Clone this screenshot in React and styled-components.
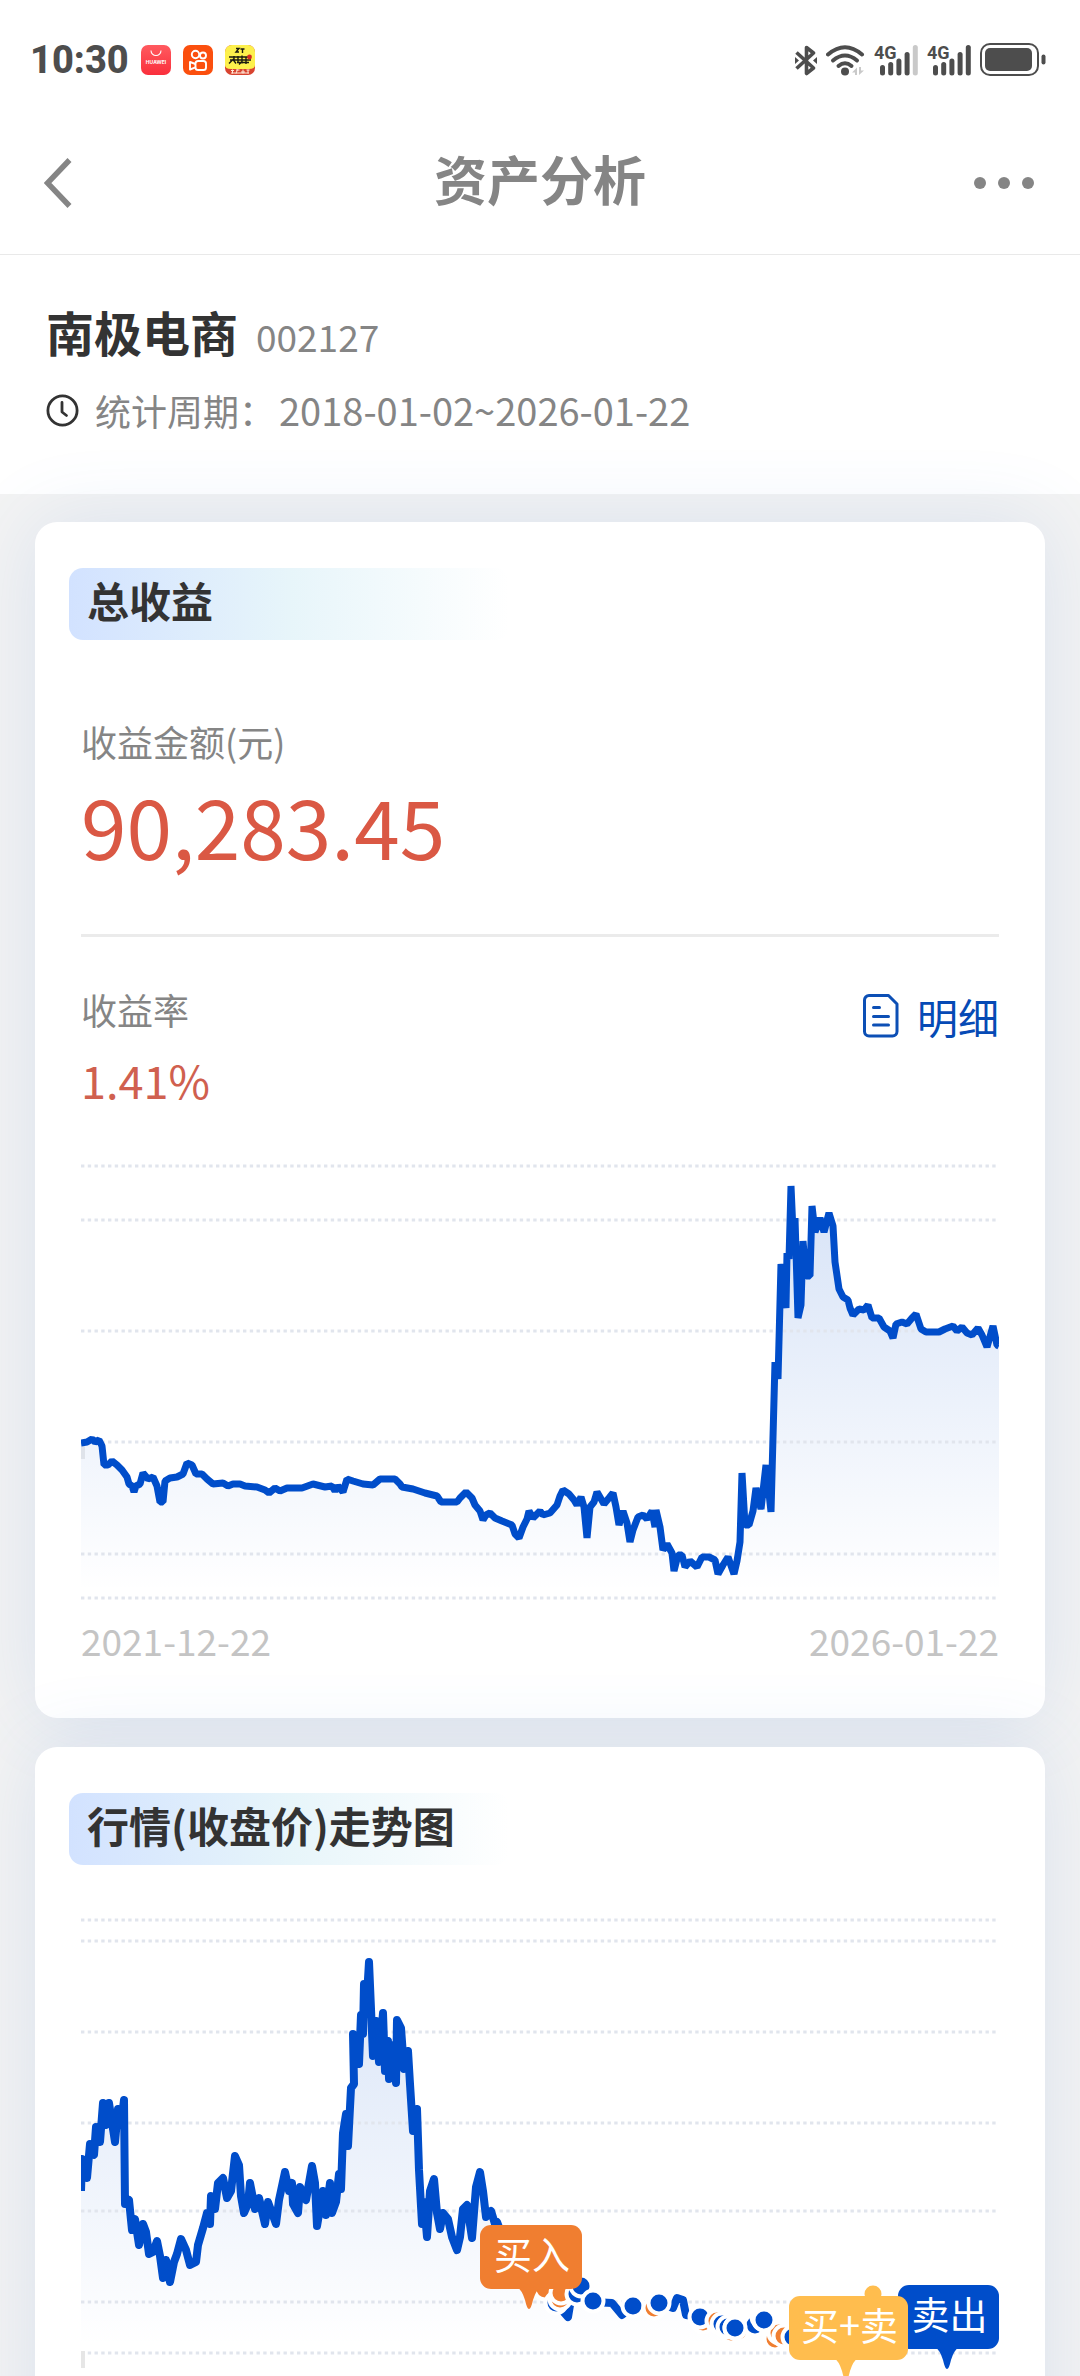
// src/App.jsx
import React from 'react';
import styled, { createGlobalStyle } from 'styled-components';

// --- Estilos Globais ---
const GlobalStyle = createGlobalStyle`
  * { box-sizing: border-box; }

  body {
    margin: 0;
    background: #fff;
    color: #333;
    font-family: 'Noto Sans CJK SC', 'Noto Sans', sans-serif;
  }

  h1, h2, p { margin: 0; }
`;

// --- Layout ---
const Page = styled.div`
  display: flex;
  flex-direction: column;
  height: 100vh;
  overflow: hidden;
`;

const StatusBar = styled.div`
  display: flex;
  align-items: center;
  justify-content: space-between;
  height: 112px;
  padding: 8px 34px 0 30px;
`;

const StatusGroup = styled.div`
  display: flex;
  align-items: center;
  gap: ${props => props.$gap};
`;

const Clock = styled.span`
  font-family: Roboto, sans-serif;
  font-size: 38px;
  line-height: 40px;
  font-weight: 800;
  color: #4d4d4d;
`;

const TopBar = styled.header`
  display: grid;
  grid-template-columns: 150px 1fr 150px;
  align-items: center;
  height: 143px;
  border-bottom: 1px solid #e9e9e9;
`;

const PageTitle = styled.h1`
  padding-bottom: 10px;
  font-size: 53px;
  line-height: 64px;
  font-weight: 700;
  text-align: center;
  color: #858585;
`;

const IconButton = styled.button`
  display: flex;
  align-items: center;
  justify-content: ${props => props.$align};
  height: 100%;
  padding: 0 46px 0 44px;
  border: 0;
  background: none;

  svg { flex-shrink: 0; }
`;

const Scroller = styled.main`
  flex: 1;
  min-height: 0;
  overflow-y: auto;
  scrollbar-width: none;
  background: #f3f3f3;
`;

const StockHeader = styled.section`
  display: flex;
  flex-direction: column;
  gap: 29px;
  padding: 48px 46px 62px;
  background: #fff;
`;

const StockRow = styled.div`
  display: flex;
  align-items: baseline;
  gap: 18px;
`;

const StockName = styled.h2`
  font-size: 48px;
  line-height: 56px;
  font-weight: 700;
`;

const StockCode = styled.span`
  font-size: 37px;
  line-height: 44px;
  color: #858585;
`;

const PeriodRow = styled.div`
  display: flex;
  align-items: center;
  gap: 16px;
  font-size: 36px;
  line-height: 44px;
  color: #858585;
`;

const PeriodDates = styled.span`
  margin-left: 4px;
  font-size: 38px;
`;

const CardList = styled.div`
  display: flex;
  flex-direction: column;
  gap: 29px;
  padding: 28px 35px;
`;

const Card = styled.section`
  padding: 46px 46px 56px;
  border-radius: 22px;
  background: #fff;
  box-shadow: 0 0 80px rgba(70, 130, 215, 0.14);
`;

const CardTitle = styled.h2`
  width: 440px;
  margin-left: -12px;
  padding: 0 18px 8px;
  border-radius: 14px;
  background: linear-gradient(90deg, #d2e2ff, #e7f5fa 50%, #fff);
  font-size: 42px;
  line-height: 64px;
  font-weight: 700;
  white-space: nowrap;
`;

const Label = styled.p`
  font-size: 36px;
  line-height: 44px;
  color: #858585;
`;

const TotalBlock = styled.div`
  display: flex;
  flex-direction: column;
  gap: 18px;
  padding: 79px 0 65px;
  border-bottom: 3px solid #ebebeb;
`;

const TotalValue = styled.p`
  font-size: 82px;
  line-height: 88px;
  color: #da5844;
`;

const RateRow = styled.div`
  display: flex;
  align-items: flex-start;
  justify-content: space-between;
  padding: 50px 0 52px;
`;

const RateBlock = styled.div`
  display: flex;
  flex-direction: column;
  gap: 21px;
`;

const RateValue = styled.p`
  font-size: 45px;
  line-height: 56px;
  color: #d0604f;
`;

const DetailLink = styled.a`
  display: flex;
  align-items: center;
  gap: 18px;
  font-size: 41px;
  line-height: 58px;
  color: #064ab5;
  text-decoration: none;
`;

const ChartSvg = styled.svg`
  display: block;
  width: 100%;
  height: auto;
  margin-top: ${props => props.$top || '0'};
`;

const DateRow = styled.div`
  display: flex;
  justify-content: space-between;
  margin-top: 16px;
  font-size: 37px;
  line-height: 44px;
  color: #c4c4c4;
`;

// --- Dados ---
const profitPoints = '0,283 6,282 11,279 14,282 18,280 21,286 23,305 27,305 31,301 36,305 41,310 46,317 48,324 51,326 53,332 55,326 59,324 62,313 67,319 72,317 76,326 79,342 82,342 84,321 89,318 96,317 102,314 106,303 111,305 115,314 121,314 126,319 132,324 142,323 147,326 152,324 159,324 164,326 176,327 184,330 188,333 194,328 199,331 206,328 221,328 232,324 244,327 251,326 254,331 257,326 262,332 266,319 272,321 282,324 292,325 299,319 314,319 319,324 321,327 332,329 344,333 356,336 360,342 376,342 379,338 385,332 391,338 394,345 399,351 402,360 405,355 409,353 414,358 421,361 431,365 434,374 438,378 442,367 446,359 448,351 452,358 459,351 462,355 469,353 476,345 479,336 482,330 488,334 493,340 496,345 500,337 503,347 506,378 509,347 513,342 516,332 523,344 528,338 532,333 535,347 538,365 542,351 546,363 549,382 552,370 557,357 562,355 566,359 571,351 574,367 575,350 579,367 582,390 586,384 591,393 593,411 597,395 601,395 604,407 609,401 616,407 621,397 628,397 634,400 637,414 642,405 647,397 653,414 656,401 659,382 661,313 664,365 668,365 672,351 675,328 680,349 685,305 690,352 694,202 697,219 700,104 705,148 706,93 708,99 710,26 713,95 714,58 717,158 720,145 722,81 725,116 729,116 731,46 734,72 739,58 743,72 748,53 752,66 754,102 758,129 762,137 767,140 769,148 772,155 778,149 783,150 787,145 791,158 798,158 803,167 809,171 812,178 815,164 821,162 826,164 831,158 835,154 840,169 845,172 858,172 864,169 872,166 876,171 881,167 886,173 891,175 897,168 901,175 906,187 912,166 916,185 918,186';

const pricePoints = '0,281 1,249 6,268 9,234 13,245 15,217 19,232 22,193 25,215 28,193 34,232 37,199 40,215 43,190 44,294 48,290 51,320 54,309 58,335 62,314 65,322 68,344 72,342 76,331 79,346 82,368 85,350 89,372 93,352 96,344 100,329 105,340 109,355 115,352 117,335 122,318 126,303 129,314 130,286 134,299 137,273 142,268 146,288 150,281 154,246 158,255 160,286 163,303 167,294 169,273 174,299 178,288 184,314 187,292 195,314 198,290 204,262 208,281 211,273 212,294 217,303 219,277 225,290 231,256 234,273 236,316 242,281 245,305 249,273 251,303 255,292 258,264 260,279 262,223 265,204 267,236 270,178 273,174 272,124 278,154 280,105 282,124 283,74 285,103 288,52 292,146 295,111 298,152 302,103 304,161 307,131 308,169 312,135 315,173 316,110 320,118 323,159 327,141 329,174 332,221 336,199 338,260 341,314 343,292 346,327 349,281 353,269 356,303 359,319 362,303 367,309 371,327 376,340 379,327 382,299 386,295 391,328 395,277 399,262 402,281 405,307 410,301 414,314 416,312 430,350 446,377 472,390 487,407 491,383 501,377 512,392 531,393 541,405 552,396 578,393 592,398 596,388 602,390 605,405 619,407 646,417 672,418 682,410 699,423 735,420 770,410 800,405 840,415 850,420';

const BLUE = '#004dca';
const ORANGE = '#f07e30';
const YELLOW = '#ffbd4e';

// operações marcadas sobre a linha de preço
const trades = [
  { x: 464, y: 379, color: ORANGE },
  { x: 475, y: 393, color: BLUE },
  { x: 479, y: 389, color: ORANGE },
  { x: 480, y: 383, color: ORANGE },
  { x: 496, y: 384, color: BLUE },
  { x: 500, y: 376, color: BLUE },
  { x: 512, y: 391, color: BLUE },
  { x: 552, y: 396, color: BLUE },
  { x: 573, y: 398, color: ORANGE },
  { x: 578, y: 393, color: BLUE },
  { x: 622, y: 412, color: ORANGE },
  { x: 619, y: 407, color: BLUE },
  { x: 636, y: 411, color: ORANGE },
  { x: 641, y: 414, color: BLUE },
  { x: 657, y: 421, color: ORANGE },
  { x: 650, y: 422, color: ORANGE },
  { x: 647, y: 417, color: BLUE },
  { x: 654, y: 418, color: BLUE },
  { x: 674, y: 415, color: BLUE },
  { x: 681, y: 407, color: BLUE },
  { x: 683, y: 410, color: BLUE },
  { x: 694, y: 429, color: ORANGE },
  { x: 698, y: 423, color: ORANGE },
  { x: 703, y: 426, color: ORANGE },
  { x: 712, y: 427, color: BLUE },
  { x: 792, y: 384, color: YELLOW },
];

const topTrades = [
  { x: 654, y: 418, color: BLUE },
  { x: 683, y: 410, color: BLUE },
];

// --- Ícones ---
const HuaweiIcon = () => (
  <svg width="30" height="30" viewBox="0 0 30 30">
    <defs>
      <linearGradient id="huawei" x1="0" y1="0" x2="0" y2="1">
        <stop offset="0" stopColor="#ff5a5f" />
        <stop offset="1" stopColor="#fa2f3c" />
      </linearGradient>
    </defs>
    <rect width="30" height="30" rx="7" fill="url(#huawei)" />
    <path d="M10 5.500a5 5 0 0 0 10 0" fill="none" stroke="#fff" strokeWidth="1.100" />
    <text x="15" y="19" textAnchor="middle" fontFamily="Inter, sans-serif" fontSize="5" fontWeight="700" fill="#fff">HUAWEI</text>
  </svg>
);

const KuaishouIcon = () => (
  <svg width="30" height="30" viewBox="0 0 30 30">
    <rect width="30" height="30" rx="7" fill="#fb4f0e" />
    <g fill="none" stroke="#fff" strokeWidth="1.900" strokeLinejoin="round">
      <circle cx="12.500" cy="9.500" r="3.700" />
      <circle cx="20" cy="10.500" r="3" />
      <rect x="12.500" y="16" width="10.500" height="9" rx="2.600" />
      <path d="M12.500 19 7 17v7.500l5.500-2.200" />
    </g>
  </svg>
);

const ComicIcon = () => (
  <svg width="30" height="30" viewBox="0 0 30 30">
    <clipPath id="comic"><rect width="30" height="30" rx="7" /></clipPath>
    <g clipPath="url(#comic)">
      <rect width="30" height="30" fill="#d8432f" />
      <path d="M0 0h30v20q0 4-6 4H6q-6 0-6-4z" fill="#fdf04c" />
      <g fill="none" stroke="#1b1a10" strokeWidth="1.400">
        <path d="M11 3.500h3l-3 3.500h3M15.500 4h4M17.500 4v4" />
        <path d="M4 12h20M5 15h21M4 18.500l4-4 3 4M9 11v4M13 11v7M17 10.500v8M21 12v7M12 17.500h12M14 19.500l3-3" />
      </g>
      <circle cx="24.500" cy="12" r="2.400" fill="#d32c22" />
      <path d="M6 25.500h3M7.500 24.500v4M11 25h3.500M12.500 24.500l-1.500 4M16 27h4M18 24.500v4M21.500 25h3M23 25v3.500M6 28h18" fill="none" stroke="#ffe9d8" strokeWidth="1" />
    </g>
  </svg>
);

const BluetoothIcon = () => (
  <svg width="22" height="31" viewBox="0 0 22 31">
    <path d="M1.500 7.500 18.500 23 11.500 28.500V2.500L18.500 8 1.500 23.500" fill="none" stroke="#4d4d4d" strokeWidth="3.600" strokeLinejoin="round" />
    <path d="M0 12v7l4-3.500zM22 12v7l-4-3.500z" fill="#4d4d4d" />
  </svg>
);

const WifiIcon = () => (
  <svg width="39" height="31" viewBox="0 0 39 31">
    <g fill="none" stroke="#4d4d4d" strokeWidth="4" strokeLinecap="round">
      <path d="M2 9.500Q19 -5 36 9.500" />
      <path d="M7 15.500Q19 5.500 31 15.500" />
      <path d="M12.500 21Q19 15.500 25.500 21" />
    </g>
    <circle cx="19" cy="26.500" r="4" fill="#4d4d4d" />
    <path d="M26 27.500l5-5V30h-2v-2.500zM38 25.500l-5 4.500v-8h2v3.500z" fill="#c9c9c9" />
  </svg>
);

const SignalIcon = ({ bars }) => {
  const tops = [20, 17, 13.5, 7, 0];
  return (
    <svg width="44" height="43" viewBox="0 -6 44 43">
      <text x="0" y="14" fontFamily="Roboto, sans-serif" fontSize="18" fontWeight="700" fill="#4d4d4d">4G</text>
      {tops.map((top, i) => (
        <rect key={top} x={6 + i * 8.2} y={top} width="5" height={30.5 - top} rx="2.500" fill={i < bars ? '#4d4d4d' : '#c9c9c9'} />
      ))}
    </svg>
  );
};

const BatteryIcon = () => (
  <svg width="66" height="34" viewBox="0 0 66 34">
    <rect x="1" y="1" width="57" height="31" rx="9" fill="none" stroke="#4d4d4d" strokeWidth="2" />
    <rect x="5" y="5" width="47" height="23" rx="5" fill="#4d4d4d" />
    <rect x="61.500" y="11.500" width="4" height="10" rx="2" fill="#4d4d4d" />
  </svg>
);

const BackIcon = () => (
  <svg width="28" height="50" viewBox="0 0 28 50">
    <path d="M25.500 2 3.500 25l22 23" fill="none" stroke="#858585" strokeWidth="5.500" />
  </svg>
);

const MoreIcon = () => (
  <svg width="60" height="12" viewBox="0 0 60 12">
    <circle cx="6" cy="6" r="6" fill="#858585" />
    <circle cx="30" cy="6" r="6" fill="#858585" />
    <circle cx="54" cy="6" r="6" fill="#858585" />
  </svg>
);

const ClockIcon = () => (
  <svg width="33" height="33" viewBox="0 0 33 33">
    <g fill="none" stroke="#333" strokeWidth="2.800" strokeLinecap="round" strokeLinejoin="round">
      <circle cx="16.500" cy="16.500" r="14.600" />
      <path d="M16 8.500v9.500l4.500 3.500" />
    </g>
  </svg>
);

const DetailIcon = () => (
  <svg width="36" height="44" viewBox="0 0 36 44">
    <g fill="none" stroke="#0c4fb5" strokeWidth="3" strokeLinecap="round" strokeLinejoin="round">
      <path d="M6 1.500h19.500L34 10v27.500a4.500 4.500 0 0 1-4.500 4.500H6a4.500 4.500 0 0 1-4.500-4.500V6A4.500 4.500 0 0 1 6 1.500z" />
      <path d="M10.500 13.500h6M10.500 22.500h15M10.500 31h15" />
    </g>
  </svg>
);

// --- Gráficos ---
const GridLines = ({ rows }) => (
  <g stroke="#e1e5ed" strokeWidth="3.200" strokeDasharray="3.375 3.375">
    {rows.map(y => <line key={y} x1="0" x2="916" y1={y} y2={y} />)}
  </g>
);

const AreaFill = ({ id, points, base }) => {
  const lastX = points.split(' ').pop().split(',')[0];
  return (
    <>
      <defs>
        <linearGradient id={id} gradientUnits="userSpaceOnUse" x1="0" y1="26" x2="0" y2={base}>
          <stop offset="0" stopColor={BLUE} stopOpacity="0.160" />
          <stop offset="1" stopColor={BLUE} stopOpacity="0" />
        </linearGradient>
      </defs>
      <polygon points={`0,${base} ${points} ${lastX},${base}`} fill={`url(#${id})`} />
    </>
  );
};

const TradeDot = ({ x, y, color }) => (
  <circle cx={x} cy={y} r="10.500" fill={color} stroke="#fff" strokeWidth="4" />
);

const Flag = ({ x, y, width, tip, color, children }) => (
  <g>
    <path d={`M${tip - 12} ${y + 62}q5 3 8 13q4 18 8 0q3 -10 8 -13z`} fill={color} />
    <rect x={x} y={y} width={width} height="64" rx="11" fill={color} />
    <text x={x + width / 2 + 1} y={y + 44} textAnchor="middle" fontSize="38" fill="#fff">{children}</text>
  </g>
);

const ProfitChart = () => (
  <ChartSvg viewBox="0 0 918 442">
    <AreaFill id="profitFill" points={profitPoints} base={432} />
    <GridLines rows={[6, 60, 171, 282, 394, 438]} />
    <rect x="0" y="284" width="4" height="15" fill="#dfe3ea" />
    <polyline points={profitPoints} fill="none" stroke={BLUE} strokeWidth="7" strokeLinejoin="bevel" />
  </ChartSvg>
);

const PriceChart = () => (
  <ChartSvg viewBox="0 0 918 520" $top="45px">
    <AreaFill id="priceFill" points={pricePoints} base={436} />
    <GridLines rows={[10, 31, 122, 213, 301, 392, 443]} />
    <rect x="0" y="441" width="4" height="17" fill="#e6e6e6" />
    <polyline points={pricePoints} fill="none" stroke={BLUE} strokeWidth="8" strokeLinejoin="round" />
    {trades.map(t => <TradeDot key={`${t.x}-${t.y}`} {...t} />)}
    {topTrades.map(t => <TradeDot key={`${t.x}-${t.y}`} {...t} />)}
    <Flag x={399} y={315} width={102} tip={448} color={ORANGE}>买入</Flag>
    <Flag x={817} y={375} width={101} tip={866} color={BLUE}>卖出</Flag>
    <Flag x={708} y={386} width={119} tip={765} color={YELLOW}>买+卖</Flag>
  </ChartSvg>
);

const App = () => {
  return (
    <Page>
      <GlobalStyle />

      <StatusBar>
        <StatusGroup $gap="12px">
          <Clock>10:30</Clock>
          <HuaweiIcon />
          <KuaishouIcon />
          <ComicIcon />
        </StatusGroup>
        <StatusGroup $gap="9px">
          <BluetoothIcon />
          <WifiIcon />
          <SignalIcon bars={4} />
          <SignalIcon bars={5} />
          <BatteryIcon />
        </StatusGroup>
      </StatusBar>

      <TopBar>
        <IconButton type="button" aria-label="返回" $align="flex-start">
          <BackIcon />
        </IconButton>
        <PageTitle>资产分析</PageTitle>
        <IconButton type="button" aria-label="更多" $align="flex-end">
          <MoreIcon />
        </IconButton>
      </TopBar>

      <Scroller>
        <StockHeader>
          <StockRow>
            <StockName>南极电商</StockName>
            <StockCode>002127</StockCode>
          </StockRow>
          <PeriodRow>
            <ClockIcon />
            <span>统计周期：<PeriodDates>2018-01-02~2026-01-22</PeriodDates></span>
          </PeriodRow>
        </StockHeader>

        <CardList>
          {/* Lucro total */}
          <Card>
            <CardTitle>总收益</CardTitle>
            <TotalBlock>
              <Label>收益金额(元)</Label>
              <TotalValue>90,283.45</TotalValue>
            </TotalBlock>
            <RateRow>
              <RateBlock>
                <Label>收益率</Label>
                <RateValue>1.41%</RateValue>
              </RateBlock>
              <DetailLink href="#detail">
                <DetailIcon />
                明细
              </DetailLink>
            </RateRow>
            <ProfitChart />
            <DateRow>
              <span>2021-12-22</span>
              <span>2026-01-22</span>
            </DateRow>
          </Card>

          {/* Evolução do preço */}
          <Card>
            <CardTitle>行情(收盘价)走势图</CardTitle>
            <PriceChart />
          </Card>
        </CardList>
      </Scroller>
    </Page>
  );
};

export default App;
